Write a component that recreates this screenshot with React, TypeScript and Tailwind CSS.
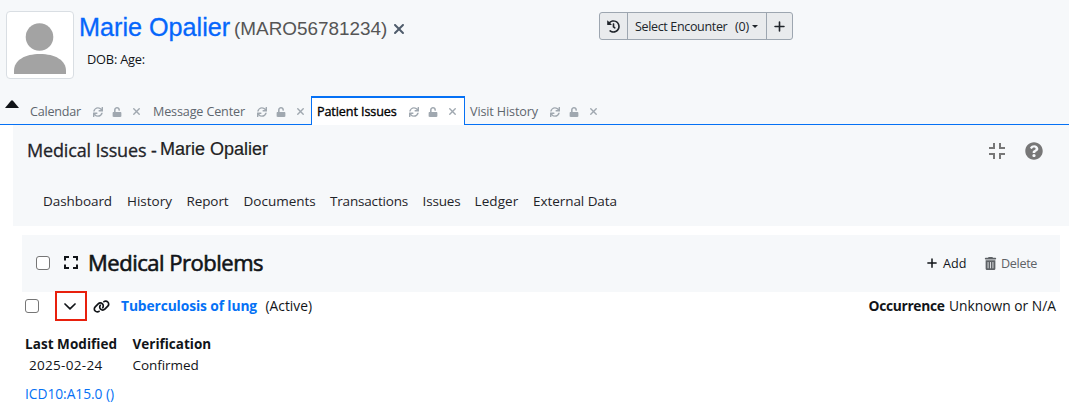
import React from "react";
import { FaHistory, FaQuestionCircle, FaSync, FaUnlock } from "react-icons/fa";
import { FaLink, FaPlus, FaTrashCan, FaXmark } from "react-icons/fa6";

function TabIcons() {
  return (
    <span className="flex items-center text-[#a0a8b0]">
      <FaSync className="size-[10px]" />
      <FaUnlock className="ml-[9px] h-[10px] w-[10px]" />
      <FaXmark className="ml-[9px] size-[11px]" />
    </span>
  );
}

function Checkbox() {
  return <span className="block size-[14px] shrink-0 rounded-[3px] border border-[#767676] bg-white" />;
}

export default function App() {
  return (
    <div className="flex h-[416px] w-[1069px] flex-col overflow-hidden whitespace-nowrap bg-white font-['Open_Sans',sans-serif] text-[#111418]">
      <header className="flex h-[96px] shrink-0 bg-[#f6f8fa]">
        <div className="mt-[11px] ml-[6px] flex size-[68px] shrink-0 justify-center rounded-[4px] border border-[#d9dee3] bg-white">
          <svg viewBox="0 0 66 66" className="size-[66px]" fill="#a3a3a3">
            <circle cx="32.5" cy="25" r="13.8" />
            <path d="M7 62V59C7 48 18 42 33 42S59 48 59 59V62Z" />
          </svg>
        </div>
        <div className="ml-[5px] flex w-[515px] flex-col pt-[11px]">
          <div className="flex h-[32px] items-start font-['Liberation_Sans',sans-serif]">
            <span className="w-[155px] text-[25.2px] leading-[32px] text-[#0566fb] [-webkit-text-stroke:0.3px]">Marie Opalier</span>
            <span className="w-[157px] text-[18.9px] leading-[35px] text-[#555555]">(MARO56781234)</span>
            <FaXmark className="mt-[10px] size-[16px] text-[#4f5c6b]" />
          </div>
          <span className="ml-[8px] mt-[7px] text-[12.8px] leading-[19px] tracking-[-0.2px]">DOB: Age:</span>
        </div>
        <div className="ml-[5px] mt-[12px] flex h-[28px] w-[194px] shrink-0 overflow-hidden rounded-[3px] border border-[#9da6b0] bg-[#e9ebed] text-[#20252b]">
          <span className="flex w-[28px] items-center justify-center border-r border-[#9da6b0]">
            <FaHistory className="size-[13px]" />
          </span>
          <span className="flex w-[139px] items-center border-r border-[#9da6b0] pl-[7px] pt-[2px] text-[12.5px]">
            <span className="w-[100px] tracking-[-0.34px]">Select Encounter</span>
            <span className="w-[17px] tracking-[-0.2px]">(0)</span>
            <span className="mb-[2px] border-x-[3px] border-t-[3px] border-x-transparent border-t-[#20252b]" />
          </span>
          <span className="flex flex-1 items-center justify-center">
            <FaPlus className="size-[13px]" />
          </span>
        </div>
      </header>

      <nav className="flex h-[29px] shrink-0 bg-[#f6f8fa] text-[12.6px] text-[#5e666e]">
        <div className="flex w-[311px] border-b border-[#0571f5]">
          <svg viewBox="0 0 14 8" className="ml-[5px] mt-[4px] h-[8px] w-[14px]" fill="#111418">
            <path d="M0 8 6 .7Q7 0 8 .7L14 8Z" />
          </svg>
          <div className="ml-[11px] flex w-[123px] items-center pt-[3px]">
            <span className="mt-px w-[63px] tracking-[-0.22px]">Calendar</span>
            <TabIcons />
          </div>
          <div className="flex items-center pt-[3px]">
            <span className="mt-px w-[104px] tracking-[-0.15px]">Message Center</span>
            <TabIcons />
          </div>
        </div>
        <div className="flex w-[154px] items-center border-x border-t-2 border-[#0571f5] bg-white pl-[5px]">
          <span className="mt-px w-[92px] tracking-[-0.1px] text-black [-webkit-text-stroke:0.35px]">Patient Issues</span>
          <TabIcons />
        </div>
        <div className="flex flex-1 items-center border-b border-[#0571f5] pl-[5px] pt-[3px]">
          <span className="mt-px w-[80px] tracking-[-0.13px]">Visit History</span>
          <TabIcons />
        </div>
      </nav>

      <section className="ml-[13px] h-[101px] shrink-0 bg-[#f6f8fa] text-[#1f2429]">
        <div className="flex h-[51px] items-center pl-[14px]">
          <span className="w-[133px] text-[18px] tracking-[-0.16px] [-webkit-text-stroke:0.3px]">Medical Issues -</span>
          <span className="mb-[3px] flex-1 font-['Liberation_Sans',sans-serif] text-[18px] text-[#222222] [-webkit-text-stroke:0.2px]">Marie Opalier</span>
          <svg viewBox="0 0 16 16" className="mr-[2px] size-[16px]" fill="none" stroke="#777777" strokeWidth="2">
            <path d="M5 0V5H0M11 0V5H16M0 11H5V16M16 11H11V16" />
          </svg>
          <FaQuestionCircle className="ml-[18px] mr-[26px] size-[18px] text-[#777777]" />
        </div>
        <div className="flex h-[50px] items-center pl-[30px] text-[13.5px]">
          <span className="w-[84px] tracking-[-0.07px]">Dashboard</span>
          <span className="w-[59.5px]">History</span>
          <span className="w-[57px] tracking-[-0.1px]">Report</span>
          <span className="w-[86.5px]">Documents</span>
          <span className="w-[92.5px] tracking-[-0.18px]">Transactions</span>
          <span className="w-[52px] tracking-[-0.14px]">Issues</span>
          <span className="w-[58.5px] tracking-[0.1px]">Ledger</span>
          <span className="tracking-[-0.06px]">External Data</span>
        </div>
      </section>

      <section className="ml-[22px] mt-[9px] flex h-[57px] w-[1038px] shrink-0 items-center bg-[#f6f8fa] pb-[2px] pl-[14px]">
        <Checkbox />
        <svg viewBox="0 0 14 13" className="ml-[14px] h-[13px] w-[14px]" fill="none" stroke="#111418" strokeWidth="2">
          <path d="M1 4.5V1H5M9 1H13V4.5M1 8.5V12H5M9 12H13V8.5" />
        </svg>
        <h2 className="ml-[10px] flex-1 text-[22px] tracking-[-0.49px] [-webkit-text-stroke:0.6px]">Medical Problems</h2>
        <FaPlus className="mt-px size-[12px]" />
        <span className="ml-[5px] mt-[3px] w-[41px] text-[12.6px]">Add</span>
        <FaTrashCan className="mt-px size-[13px] text-[#5e6266]" />
        <span className="ml-[4px] mr-[23px] mt-[3px] w-[36px] text-[12.6px] tracking-[-0.33px] text-[#5e6266]">Delete</span>
      </section>

      <section className="flex h-[29px] shrink-0 items-center pl-[25px] text-[13.8px]">
        <span className="mb-[2px]"><Checkbox /></span>
        <span className="mb-[2px] ml-[16px] flex h-[30px] w-[32px] items-center justify-center border-2 border-[#e8200d]">
          <svg viewBox="0 0 12 7" className="mr-[2px] mt-[2px] h-[7px] w-[12px]" fill="none" stroke="#111418" strokeWidth="1.7" strokeLinecap="round" strokeLinejoin="round">
            <path d="M1 1 6 5.8 11 1" />
          </svg>
        </span>
        <FaLink className="ml-[6px] size-[17px]" />
        <span className="ml-[11px] w-[144.5px] font-bold tracking-[-0.11px] text-[#0571f5]">Tuberculosis of lung</span>
        <span className="flex-1">(Active)</span>
        <span className="w-[80.5px] font-bold tracking-[-0.32px]">Occurrence</span>
        <span className="mr-[13px] w-[107px]">Unknown or N/A</span>
      </section>

      <section className="mt-[13px] flex flex-col pl-[25px] text-[13.5px] leading-[21px]">
        <div className="flex h-[21px] items-center font-bold">
          <span className="w-[107.5px] tracking-[0.05px]">Last Modified</span>
          <span>Verification</span>
        </div>
        <div className="flex h-[21px] items-center">
          <span className="w-[107.5px] pl-[4px] tracking-[0.3px]">2025-02-24</span>
          <span className="tracking-[-0.05px]">Confirmed</span>
        </div>
        <span className="mt-[7px] text-[13.8px] tracking-[-0.05px] text-[#0571f5]">ICD10:A15.0 ()</span>
      </section>
    </div>
  );
}
